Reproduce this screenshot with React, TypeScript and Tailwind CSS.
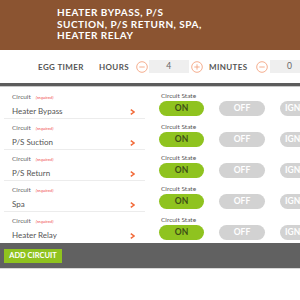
import React from 'react';

const circuits = ['Heater Bypass', 'P/S Suction', 'P/S Return', 'Spa', 'Heater Relay'];

function RoundBtn({ sign }: { sign: '-' | '+' }) {
  return (
    <svg width="12" height="12" viewBox="0 0 12 12" className="shrink-0">
      <circle cx="6" cy="6" r="5.3" fill="none" stroke="#f4a582" strokeWidth="0.9" />
      <line x1="3.3" y1="6" x2="8.7" y2="6" stroke="#f4a582" strokeWidth="0.9" />
      {sign === '+' && <line x1="6" y1="3.3" x2="6" y2="8.7" stroke="#f4a582" strokeWidth="0.9" />}
    </svg>
  );
}

function CircuitRow({ name, last }: { name: string; last?: boolean }) {
  return (
    <div className="flex h-[31px]">
      <div className={`ml-[4px] w-[141px] shrink-0 pl-[8px] pr-[10px] pt-[5px] ${last ? '' : 'border-b border-[#ececec]'}`}>
        <div className="flex items-baseline gap-[5px] leading-[8px]">
          <span className="text-[6.5px] text-[#666]">Circuit</span>
          <span className="text-[4.5px] italic text-[#f0484a]">(required)</span>
        </div>
        <div className="mt-[4px] flex items-center justify-between">
          <span className="text-[8px] leading-[11px] text-[#555]">{name}</span>
          <svg width="5" height="6" viewBox="0 0 5 6">
            <path d="M0.8 0.6 L4 3 L0.8 5.4" fill="none" stroke="#f26b3a" strokeWidth="1.5" />
          </svg>
        </div>
      </div>
      <div className="ml-[14px] shrink-0 pt-[4px]">
        <div className="pl-[2px] text-[6.5px] leading-[8px] text-[#555]">Circuit State</div>
        <div className="mt-[1px] flex gap-[15px]">
          <div className="flex h-[15px] w-[45px] shrink-0 items-center justify-center rounded-full bg-[#8fc31f] text-[8.5px] font-bold text-[#3d4d17]">ON</div>
          <div className="flex h-[15px] w-[46px] shrink-0 items-center justify-center rounded-full bg-[#d2d2d2] text-[8.5px] font-bold text-white">OFF</div>
          <div className="flex h-[15px] w-[46px] shrink-0 items-center justify-start rounded-full bg-[#d2d2d2] pl-[5px] text-[8.5px] font-bold text-white">IGNORE</div>
        </div>
      </div>
    </div>
  );
}

export default function App() {
  return (
    <div className="h-[300px] w-[300px] overflow-hidden bg-white" style={{ fontFamily: 'Lato, "Liberation Sans", sans-serif' }}>
      {/* header */}
      <div className="h-[50px] bg-[#8b5431] pl-[57px] pt-[7px]">
        <div className="whitespace-nowrap text-[10px] font-bold uppercase leading-[11.5px] tracking-[0.5px] text-white">
          Heater Bypass, P/S
          <br />
          Suction, P/S Return, Spa,
          <br />
          Heater Relay
        </div>
      </div>

      {/* egg timer */}
      <div className="flex h-[33px] items-center whitespace-nowrap text-[8px] font-bold tracking-[0.4px] text-[#555]">
        <span className="ml-[38px] shrink-0">EGG TIMER</span>
        <span className="ml-[15px] shrink-0">HOURS</span>
        <div className="ml-[7px] shrink-0"><RoundBtn sign="-" /></div>
        <div className="ml-[1px] flex h-[13px] w-[40px] shrink-0 items-center justify-center bg-[#efefef] text-[8.5px] font-normal text-[#666]">4</div>
        <div className="ml-[2px] shrink-0"><RoundBtn sign="+" /></div>
        <span className="ml-[6px] shrink-0">MINUTES</span>
        <div className="ml-[8px] shrink-0"><RoundBtn sign="-" /></div>
        <div className="ml-[2px] flex h-[13px] w-[40px] shrink-0 items-center justify-center bg-[#efefef] text-[8.5px] font-normal text-[#666]">0</div>
      </div>
      <div className="h-[3px] bg-[#5c5c5c]" />
      <div className="h-[1px] bg-[#c8c8c8]" />

      {/* rows */}
      <div className="pt-[1px]">
        {circuits.map((c, i) => (
          <CircuitRow key={c} name={c} last={i === circuits.length - 1} />
        ))}
      </div>

      {/* footer */}
      <div className="h-[25px] bg-[#616161] pl-[4px] pt-[6px]">
        <div className="flex h-[14px] w-[58px] items-center justify-center bg-[#8fc31f] text-[7.5px] font-bold text-white">ADD CIRCUIT</div>
      </div>
      <div className="h-[1px] bg-[#d8d8d8]" />
    </div>
  );
}
